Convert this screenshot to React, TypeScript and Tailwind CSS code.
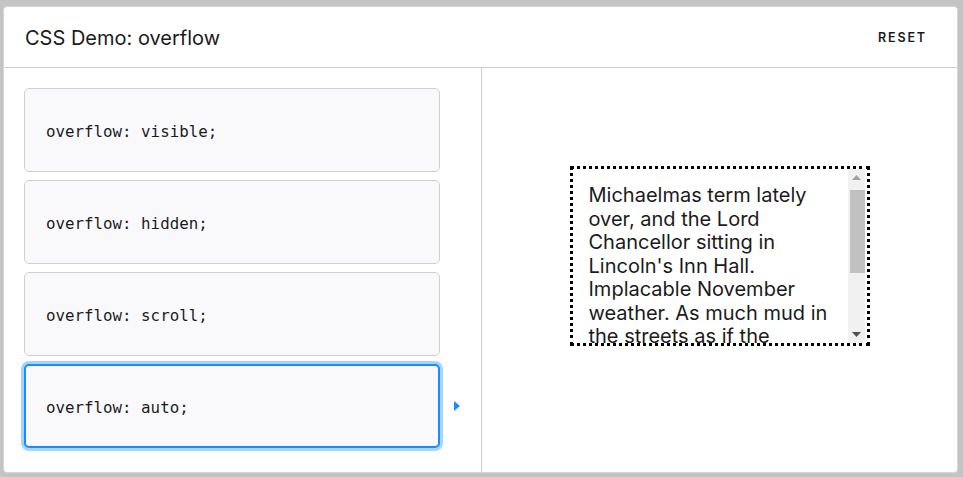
import React from "react";

const options = [
  "overflow: visible;",
  "overflow: hidden;",
  "overflow: scroll;",
  "overflow: auto;",
];

const selected = 3;

const passage =
  "Michaelmas term lately over, and the Lord Chancellor sitting in Lincoln's Inn Hall. Implacable November weather. As much mud in the streets as if the waters had but newly retired from the face of the earth.";

function ChoiceButton({ label, active }: { label: string; active: boolean }) {
  return (
    <div className="flex items-center">
      <button
        className={
          active
            ? "w-[416px] h-[84px] flex items-center text-left px-[20px] pt-[3px] bg-[#f9f9fb] rounded-[5px] border-2 border-[#1a8cff] shadow-[0_0_0_3px_#a4d5ff]"
            : "w-[416px] h-[84px] flex items-center text-left px-[21px] pt-[3px] bg-[#f9f9fb] rounded-[5px] border border-[#cfcfcf]"
        }
      >
        <span className="font-['DejaVu_Sans_Mono',monospace] text-[15.8px] text-[#1b1b1b]">
          {label}
        </span>
      </button>
      {active && (
        <svg width="6" height="10" viewBox="0 0 6 10" className="ml-[14px]">
          <path d="M0 0 L6 5 L0 10 Z" fill="#1a8cff" />
        </svg>
      )}
    </div>
  );
}

function FakeScrollbar() {
  return (
    <div className="w-[19px] shrink-0 flex pr-[2px]">
      <div className="flex-1 bg-[#f1f1f1] flex flex-col">
        <div className="h-[17px] flex items-center justify-center">
          <svg width="9" height="5" viewBox="0 0 9 5">
            <path d="M0 5 L4.5 0 L9 5 Z" fill="#a3a3a3" />
          </svg>
        </div>
        <div className="flex-1 flex flex-col pt-[4px] pl-[2px]">
          <div className="h-[83px] bg-[#c1c1c1]" />
        </div>
        <div className="h-[17px] flex items-center justify-center">
          <svg width="9" height="5" viewBox="0 0 9 5">
            <path d="M0 0 L4.5 5 L9 0 Z" fill="#505050" />
          </svg>
        </div>
      </div>
    </div>
  );
}

export default function App() {
  return (
    <div className="w-[963px] h-[477px] bg-[#c4c4c4] pl-[3px] pt-[6px] pr-[5px] pb-[4px] font-['Inter',sans-serif] text-[#1b1b1b]">
      <div className="h-full bg-white border border-[#d6d6d6] rounded-[4px] flex flex-col overflow-hidden">
        {/* header */}
        <div className="h-[61px] shrink-0 border-b border-[#cdcdcd] flex items-center justify-between pl-[21px] pr-[30px]">
          <h1 className="text-[20px] leading-none pt-[2px]">CSS Demo: overflow</h1>
          <button className="text-[12.5px] font-semibold tracking-[0.15em] uppercase pt-[2px]">
            Reset
          </button>
        </div>

        {/* body */}
        <div className="flex-1 flex min-h-0">
          <div className="w-[478px] shrink-0 border-r border-[#cdcdcd] pt-[20px] pl-[20px] flex flex-col gap-2">
            {options.map((o, i) => (
              <ChoiceButton key={o} label={o} active={i === selected} />
            ))}
          </div>

          <div className="flex-1 flex justify-center items-start pt-[98px]">
            <div className="w-[300px] h-[180px] border-[3px] border-dotted border-black flex">
              <div className="flex-1 overflow-hidden pt-[15px] pl-[16px] pr-[10px] text-[20px] leading-[23.5px]">
                {passage}
              </div>
              <FakeScrollbar />
            </div>
          </div>
        </div>
      </div>
    </div>
  );
}
